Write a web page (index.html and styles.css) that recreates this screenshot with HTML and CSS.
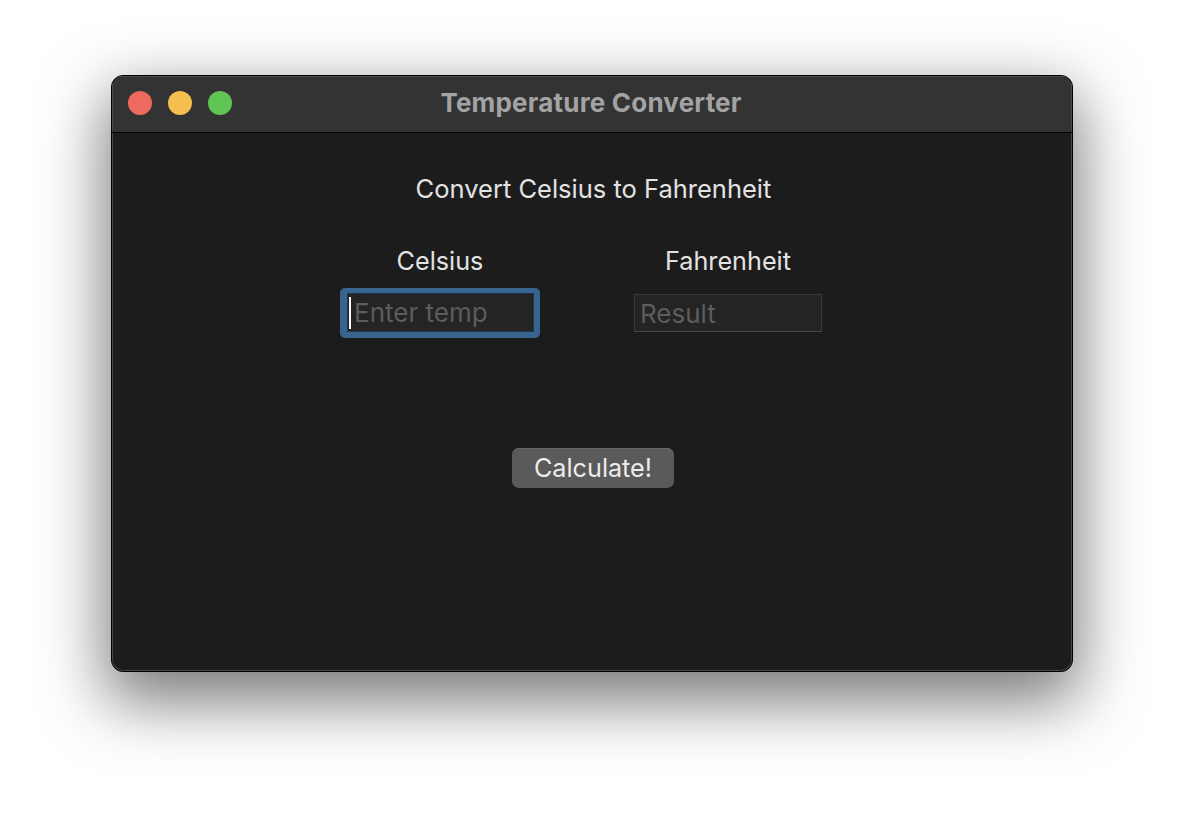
FILE: index.html
```html
<!DOCTYPE html>
<html>
<head>
<meta charset="utf-8">
<link rel="stylesheet" href="styles.css">
</head>
<body>
<div class="window">
  <div class="titlebar">
    <div class="lights">
      <span class="light red"></span>
      <span class="light yellow"></span>
      <span class="light green"></span>
    </div>
    <div class="title">Temperature Converter</div>
  </div>
  <div class="content">
    <div class="heading">Convert Celsius to Fahrenheit</div>
    <div class="fields">
      <div class="field">
        <div class="label">Celsius</div>
        <div class="ring">
          <div class="input"><span class="caret"></span><span class="ph">Enter temp</span></div>
        </div>
      </div>
      <div class="field">
        <div class="label">Fahrenheit</div>
        <div class="result"><span class="ph">Result</span></div>
      </div>
    </div>
    <div class="btn">Calculate!</div>
  </div>
</div>
</body>
</html>
```
FILE: styles.css
```css
html, body {
  margin: 0;
  padding: 0;
  background: #ffffff;
}
body {
  width: 1184px;
  height: 820px;
  padding: 75px 0 0 111px;
  box-sizing: border-box;
  font-family: Inter, "Noto Sans", sans-serif;
  overflow: hidden;
}
.window {
  width: 962px;
  height: 597px;
  box-sizing: border-box;
  background: #1c1c1c;
  border: 1px solid #000;
  border-radius: 12px;
  box-shadow: inset 0 0 0 1px #4a4a4a, 0 24px 64px 6px rgba(0,0,0,0.52);
  overflow: hidden;
  display: flex;
  flex-direction: column;
}
.titlebar {
  height: 57px;
  flex: none;
  background: #333333;
  border-bottom: 1px solid #000;
  box-sizing: border-box;
  position: relative;
  display: flex;
  align-items: center;
  justify-content: center;
  box-shadow: inset 1px 1px 0 #4a4a4a, inset -1px 0 0 #4a4a4a;
}
.lights {
  position: absolute;
  left: 16px;
  top: 15px;
  display: flex;
  gap: 16px;
}
.light {
  width: 24px;
  height: 24px;
  border-radius: 50%;
}
.red { background: #ee6a5f; }
.yellow { background: #f5bf4f; }
.green { background: #61c554; }
.title {
  color: #a3a3a3;
  font-size: 26px;
  font-weight: 700;
  letter-spacing: 0.2px;
  margin-left: -2px;
  margin-top: -4px;
}
.content {
  flex: 1;
  display: flex;
  flex-direction: column;
  align-items: center;
  padding-top: 41px;
}
.heading {
  color: #e3e3e3;
  font-size: 25.5px;
  line-height: 30px;
  margin-left: 3px;
}
.fields {
  display: flex;
  gap: 88px;
  margin-top: 42px;
  margin-left: -16px;
}
.field {
  width: 200px;
  display: flex;
  flex-direction: column;
  align-items: center;
}
.label {
  color: #e3e3e3;
  font-size: 25.2px;
  line-height: 30px;
}
.ring {
  margin-top: 12px;
  width: 200px;
  height: 50px;
  box-sizing: border-box;
  border-radius: 5px;
  background: #3a6490;
  padding: 5px 6px 6px 7px;
}
.input {
  height: 39px;
  box-sizing: border-box;
  background: #242424;
  border: 1px solid #1f3550;
  display: flex;
  align-items: center;
  padding-left: 1px;
}
.caret {
  width: 2px;
  height: 32px;
  background: #ffffff;
  margin-right: 3px;
}
.ph {
  color: #5c5c5c;
  font-size: 26px;
}
.result {
  margin-top: 18px;
  width: 188px;
  height: 38px;
  box-sizing: border-box;
  background: #242424;
  border: 1px solid #383838;
  border-bottom-color: #4a4a4a;
  display: flex;
  align-items: center;
  padding-left: 5px;
}
.btn {
  margin-top: 110px;
  width: 162px;
  height: 40px;
  box-sizing: border-box;
  background: #5a5a5a;
  border-radius: 7px;
  color: #ececec;
  font-size: 25.2px;
  display: flex;
  align-items: center;
  justify-content: center;
  box-shadow: inset 0 1px 0 #676767;
  margin-left: 2px;
}
```
